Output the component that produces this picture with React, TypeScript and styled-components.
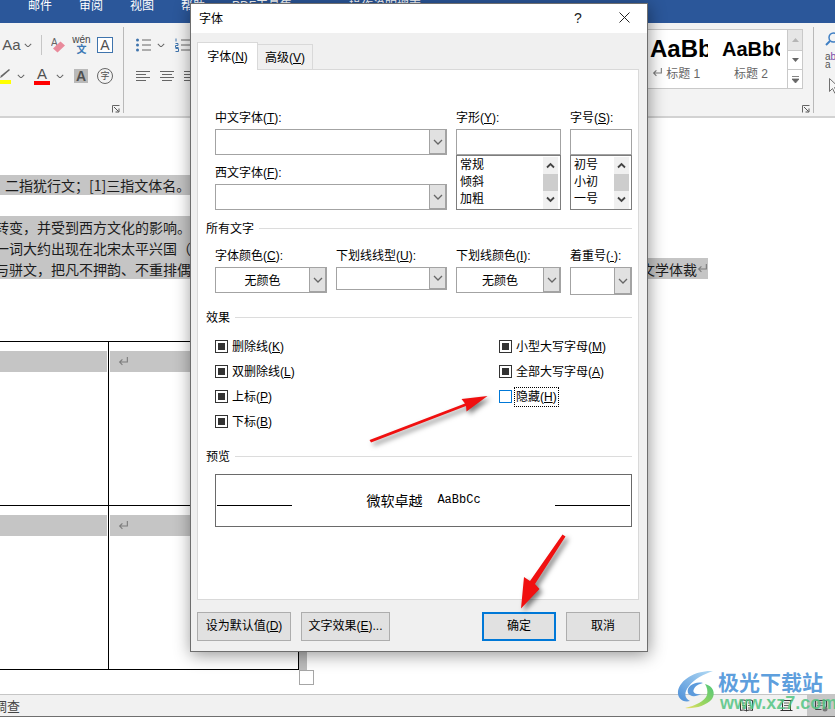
import styled, { createGlobalStyle } from 'styled-components';

const GlobalStyle = createGlobalStyle`
  html, body {
    margin: 0;
    padding: 0;
    background: #ffffff;
  }
  * {
    box-sizing: border-box;
  }
`;

const uiFont = `"Liberation Sans", "Noto Sans CJK SC", sans-serif`;

const Page = styled.div`
  position: relative;
  display: flex;
  flex-direction: column;
  width: 835px;
  height: 719px;
  overflow: hidden;
  background: #ffffff;
  font-family: ${uiFont};
  font-size: 12px;
  color: #000000;
`;

/* word window */

const TitleBar = styled.div`
  display: flex;
  flex: none;
  height: 23px;
  padding-left: 28px;
  column-gap: 27px;
  background: #2b579a;
  color: #ffffff;
  line-height: 13px;
`;

const SearchHint = styled.span`
  margin-left: 30px;
`;

const Ribbon = styled.div`
  display: flex;
  flex: none;
  height: 95px;
  padding-top: 4px;
  background: #f3f3f3;
  border-bottom: 2px solid #d2d2d2;
`;

const RibbonGroup = styled.div<{ $w: number; $pt?: number; $last?: boolean }>`
  display: flex;
  flex: none;
  flex-direction: column;
  width: ${(p) => p.$w}px;
  height: 86px;
  padding-top: ${(p) => p.$pt ?? 8}px;
  border-right: ${(p) => (p.$last ? 'none' : '1px solid #b9b9b9')};
`;

const RibbonRow = styled.div<{ $mt?: number }>`
  display: flex;
  align-items: center;
  height: 20px;
  margin-top: ${(p) => p.$mt ?? 0}px;
`;

const Cell = styled.div<{ $w: number; $ml?: number }>`
  display: flex;
  flex: none;
  flex-direction: column;
  align-items: center;
  justify-content: center;
  width: ${(p) => p.$w}px;
  margin-left: ${(p) => p.$ml ?? 0}px;
`;

const CaseLabel = styled.span`
  font-size: 15px;
  line-height: 18px;
  color: #555555;
`;

const RowDivider = styled.div`
  flex: none;
  width: 1px;
  height: 20px;
  margin-left: 8px;
  background: #c6c6c6;
`;

const PinyinText = styled.span`
  font-size: 10px;
  line-height: 9px;
  color: #444444;
`;

const PinyinGlyph = styled.span`
  font-size: 10px;
  line-height: 11px;
  font-weight: 700;
  color: #3b78b5;
`;

const BoxedLetter = styled.div`
  width: 16px;
  height: 16px;
  border: 1px solid #3f74ad;
  background: #ffffff;
  font-size: 14px;
  line-height: 14px;
  text-align: center;
  color: #505050;
`;

const ColorLetter = styled.span`
  font-size: 15px;
  line-height: 13px;
  color: #505050;
`;

const ColorBar = styled.div<{ $color: string }>`
  width: 100%;
  height: 4px;
  margin-top: 1px;
  background: ${(p) => p.$color};
`;

const ShadedLetter = styled.div`
  width: 14px;
  height: 14px;
  background: #b9b9b9;
  font-size: 14px;
  font-weight: 700;
  line-height: 14px;
  text-align: center;
  color: #505050;
`;

const CircledGlyph = styled.div`
  width: 16px;
  height: 16px;
  border: 1px solid #666666;
  border-radius: 50%;
  font-size: 9px;
  line-height: 14px;
  text-align: center;
  color: #505050;
`;

const LauncherRow = styled.div`
  display: flex;
  justify-content: flex-end;
  margin-top: auto;
  padding-right: 3px;
`;

const Gallery = styled.div`
  display: flex;
  justify-content: flex-end;
  width: 303px;
  height: 60px;
  background: #ffffff;
  border: 1px solid #c9c9c9;
`;

const StyleTile = styled.div<{ $ml: number }>`
  flex: none;
  width: 58px;
  margin-left: ${(p) => p.$ml}px;
  overflow: hidden;
`;

const StyleSample = styled.div<{ $size: number }>`
  height: 35px;
  padding-top: 4px;
  font-size: ${(p) => p.$size}px;
  font-weight: 700;
  line-height: 30px;
  white-space: nowrap;
`;

const StyleCaption = styled.div<{ $pr?: number }>`
  margin-top: 1px;
  padding-right: ${(p) => p.$pr ?? 0}px;
  line-height: 16px;
  text-align: center;
  color: #666666;
  white-space: nowrap;
`;

const GalleryScroll = styled.div`
  display: flex;
  flex: none;
  flex-direction: column;
  width: 15px;
  margin-left: 7px;
  border-left: 1px solid #c9c9c9;
`;

const GalleryButton = styled.div<{ $h: number; $disabled?: boolean }>`
  display: flex;
  align-items: center;
  justify-content: center;
  height: ${(p) => p.$h}px;
  background: ${(p) => (p.$disabled ? '#e6e6e6' : '#ffffff')};
  border-bottom: 1px solid #c9c9c9;
  &:last-child {
    border-bottom: none;
  }
`;

const EditingColumn = styled.div`
  display: flex;
  flex-direction: column;
  padding: 5px 0 0 11px;
`;

const ReplaceText = styled.div`
  margin-top: 7px;
  font-size: 10px;
  line-height: 8px;
  color: #555555;
  span {
    color: #7a4aa8;
  }
`;

const CursorSlot = styled.div`
  margin: 9px 0 0 4px;
`;

const Document = styled.div`
  flex: 1;
  padding-top: 57px;
  overflow: hidden;
  font-family: "Noto Sans CJK SC", sans-serif;
  font-size: 14px;
  color: #1c1c1c;
`;

const MarkedLine = styled.div<{ $w: number; $h?: number; $pl?: number }>`
  display: flex;
  justify-content: space-between;
  align-items: center;
  width: ${(p) => p.$w}px;
  height: ${(p) => p.$h ?? 21}px;
  padding-left: ${(p) => p.$pl ?? 0}px;
  background: #c5c5c5;
  white-space: nowrap;
  overflow: hidden;
`;

const ClippedText = styled.span`
  flex: none;
  margin-left: -5px;
`;

const LineEnd = styled.span`
  display: flex;
  flex: none;
  align-items: center;
`;

const Paragraph = styled.div`
  margin-top: 21px;
`;

const TableWrap = styled.div`
  display: flex;
  margin-top: 62px;
`;

const Table = styled.div`
  flex: none;
  width: 299px;
  border-top: 1px solid #000000;
  border-right: 1px solid #000000;
`;

const TableRow = styled.div`
  display: grid;
  grid-template-columns: 109px 189px;
  height: 164px;
  border-bottom: 1px solid #000000;
`;

const TableCell = styled.div<{ $first?: boolean }>`
  padding-top: 9px;
  padding-left: ${(p) => (p.$first ? 0 : 1)}px;
  border-right: ${(p) => (p.$first ? '1px solid #000000' : 'none')};
`;

const CellMark = styled.div<{ $pad?: boolean }>`
  display: flex;
  align-items: center;
  height: 21px;
  padding-left: ${(p) => (p.$pad ? 8 : 0)}px;
  margin-right: ${(p) => (p.$pad ? 0 : 1)}px;
  background: #c5c5c5;
`;

const RowEndMark = styled.div`
  align-self: flex-end;
  width: 8px;
  height: 19px;
  background: #bdbdbd;
`;

const ResizeHandle = styled.div`
  width: 15px;
  height: 15px;
  margin-left: 299px;
  background: #ffffff;
  border: 1px solid #a6a6a6;
`;

const StatusBar = styled.div`
  display: flex;
  flex: none;
  align-items: center;
  height: 23px;
  margin-bottom: 2px;
  background: #f1f1f1;
  border-top: 1px solid #c6c6c6;
  border-bottom: 1px solid #6f6f6f;
  font-size: 13px;
  color: #444444;
`;

const StatusText = styled.span`
  margin-left: -6px;
`;

const StatusIcons = styled.div`
  display: flex;
  align-items: center;
  align-self: stretch;
  margin-left: auto;
  column-gap: 27px;
`;

const StatusActive = styled.div`
  display: flex;
  align-items: center;
  justify-content: center;
  align-self: stretch;
  width: 28px;
  margin-left: -13px;
  background: #c6c6c6;
`;

/* font dialog */

const Dialog = styled.div`
  position: absolute;
  top: 3px;
  left: 190px;
  display: flex;
  flex-direction: column;
  width: 458px;
  height: 649px;
  background: #f0f0f0;
  border: 1px solid #6e6e6e;
  box-shadow: 1px 3px 16px rgba(0, 0, 0, 0.42);
`;

const DialogHeader = styled.div`
  display: flex;
  flex: none;
  align-items: center;
  height: 29px;
  padding: 0 0 2px 8px;
  background: #ffffff;
`;

const DialogTitle = styled.span`
  flex: 1;
`;

const CaptionButton = styled.div`
  display: flex;
  align-items: center;
  justify-content: center;
  width: 46px;
  height: 27px;
  font-size: 14px;
  color: #222222;
`;

const DialogBody = styled.div`
  flex: 1;
  padding: 9px 0 0 6px;
`;

const TabStrip = styled.div`
  display: flex;
  align-items: flex-end;
  height: 28px;
  margin-bottom: -1px;
`;

const Tab = styled.div<{ $active?: boolean }>`
  position: ${(p) => (p.$active ? 'relative' : 'static')};
  z-index: ${(p) => (p.$active ? 1 : 'auto')};
  width: ${(p) => (p.$active ? 61 : 55)}px;
  height: ${(p) => (p.$active ? 28 : 26)}px;
  padding-top: ${(p) => (p.$active ? 6 : 5)}px;
  background: ${(p) => (p.$active ? '#ffffff' : '#f0f0f0')};
  border: 1px solid #d9d9d9;
  border-bottom: ${(p) => (p.$active ? 'none' : '1px solid #d9d9d9')};
  border-left: ${(p) => (p.$active ? '1px solid #d9d9d9' : 'none')};
  line-height: 16px;
  text-align: center;
`;

const TabPanel = styled.div`
  width: 442px;
  height: 531px;
  padding: 39px 6px 0 17px;
  background: #ffffff;
  border: 1px solid #d9d9d9;
`;

const FieldLabel = styled.div`
  height: 16px;
  margin-bottom: 4px;
  line-height: 18px;
  white-space: nowrap;
`;

const FontGrid = styled.div`
  display: grid;
  grid-template-columns: 232px 105px 62px;
  column-gap: 9px;
`;

const FieldStack = styled.div`
  display: flex;
  flex-direction: column;
`;

const Combo = styled.div<{ $h?: number; $mb?: number }>`
  display: flex;
  height: ${(p) => p.$h ?? 26}px;
  margin-bottom: ${(p) => p.$mb ?? 0}px;
  background: #ffffff;
  border: 1px solid #a3a3a3;
`;

const ComboValue = styled.div`
  flex: 1;
  line-height: 26px;
  font-size: 12px;
  text-align: center;
`;

const ComboButton = styled.div`
  display: flex;
  flex: none;
  align-items: center;
  justify-content: center;
  width: 17px;
  background: #e1e1e1;
  border-left: 1px solid #a3a3a3;
  border-right: 1px solid #a3a3a3;
  border-bottom: 1px solid #a3a3a3;
`;

const TextField = styled.div`
  height: 26px;
  background: #ffffff;
  border: 1px solid #a3a3a3;
`;

const ListBox = styled.div`
  display: flex;
  height: 55px;
  background: #ffffff;
  border: 1px solid #7d7d7d;
  overflow: hidden;
`;

const ListItems = styled.div`
  flex: 1;
  padding: 1px 0 0 3px;
  line-height: 17px;
`;

const ListScroll = styled.div`
  display: flex;
  flex: none;
  flex-direction: column;
  width: 15px;
  margin: 1px 2px 0 0;
  background: #f0f0f0;
`;

const ScrollArrow = styled.div`
  display: flex;
  align-items: center;
  justify-content: center;
  height: 17px;
`;

const ScrollThumb = styled.div`
  height: 17px;
  background: #cdcdcd;
`;

const SectionHead = styled.div<{ $mt: number }>`
  display: flex;
  align-items: center;
  column-gap: 5px;
  height: 16px;
  margin: ${(p) => p.$mt}px 0 0 -9px;
`;

const SectionTitle = styled.span`
  padding-top: 2px;
  line-height: 16px;
`;

const SectionRule = styled.div`
  flex: 1;
  height: 1px;
  background: #dcdcdc;
`;

const ColorGrid = styled.div`
  display: grid;
  grid-template-columns: 112px 111px 105px 62px;
  column-gap: 9px;
  align-items: start;
  margin-top: 11px;
`;

const EffectGrid = styled.div`
  display: grid;
  grid-template-columns: 284px 1fr;
  margin-top: 9px;
`;

const CheckRow = styled.div`
  display: flex;
  align-items: center;
  column-gap: 4px;
  height: 25px;
  line-height: 16px;
`;

const CheckBox = styled.div<{ $focused?: boolean }>`
  display: flex;
  align-items: center;
  justify-content: center;
  width: 13px;
  height: 13px;
  background: #ffffff;
  border: 1px solid ${(p) => (p.$focused ? '#0078d7' : '#333333')};
`;

const CheckFill = styled.div`
  width: 7px;
  height: 7px;
  background: #333333;
`;

const FocusLabel = styled.span`
  outline: 1px dotted #000000;
  outline-offset: 1px;
`;

const PreviewBox = styled.div`
  display: flex;
  justify-content: space-between;
  height: 53px;
  margin-top: 10px;
  padding: 0 1px;
  border: 1px solid #6a6a6a;
`;

const PreviewRule = styled.div`
  flex: none;
  width: 75px;
  height: 1px;
  margin-top: 30px;
  background: #000000;
`;

const PreviewSample = styled.div`
  display: flex;
  align-items: center;
  column-gap: 15px;
  padding-bottom: 2px;
  font-size: 14px;
  color: #000000;
`;

const PreviewLatin = styled.span`
  font-family: "Liberation Mono", monospace;
  font-size: 12px;
`;

const DialogFooter = styled.div`
  display: flex;
  margin-top: 12px;
  padding-right: 7px;
  column-gap: 10px;
`;

const DialogButton = styled.div<{ $w: number; $primary?: boolean; $push?: boolean }>`
  width: ${(p) => p.$w}px;
  height: 29px;
  margin-left: ${(p) => (p.$push ? 'auto' : 0)};
  background: #e1e1e1;
  border: ${(p) => (p.$primary ? '2px solid #0078d7' : '1px solid #adadad')};
  line-height: ${(p) => (p.$primary ? 25 : 27)}px;
  text-align: center;
`;

/* overlays */

const ArrowLayer = styled.svg`
  position: absolute;
  top: 0;
  left: 0;
  pointer-events: none;
  filter: drop-shadow(3px 3px 2.5px rgba(0, 0, 0, 0.5));
`;

const Watermark = styled.div`
  position: absolute;
  top: 668px;
  left: 675px;
  display: flex;
  width: 160px;
  pointer-events: none;
`;

const LogoSvg = styled.svg`
  flex: none;
`;

const WatermarkText = styled.div`
  display: flex;
  flex-direction: column;
  margin-left: -5px;
`;

const WatermarkName = styled.span`
  margin-top: 1px;
  font-family: "Noto Sans CJK SC", sans-serif;
  font-size: 21px;
  font-weight: 700;
  line-height: 25px;
  white-space: nowrap;
  color: rgba(84, 153, 219, 0.95);
`;

const WatermarkUrl = styled.span`
  margin-left: 2px;
  font-size: 18px;
  font-weight: 700;
  line-height: 19px;
  white-space: nowrap;
  color: rgba(82, 196, 130, 0.85);
`;

/* icons */

const Chevron = ({ color = '#666666', size = 8 }: { color?: string; size?: number }) => (
  <svg width={size} height={size * 0.6} viewBox="0 0 10 6">
    <path d="M1 1l4 4 4-4" fill="none" stroke={color} strokeWidth="1.3" />
  </svg>
);

const ScrollChevron = ({ up }: { up?: boolean }) => (
  <svg width="9" height="7" viewBox="0 0 9 7">
    <path d={up ? 'M1 5.5l3.5-3.5 3.5 3.5' : 'M1 1.5l3.5 3.5 3.5-3.5'} fill="none" stroke="#444444" strokeWidth="1.8" />
  </svg>
);

const Launcher = () => (
  <svg width="8" height="8" viewBox="0 0 8 8">
    <path d="M.5 7.5v-7h7" fill="none" stroke="#666666" />
    <path d="M2 2l4.5 4.5M7 3.5v3.5H3.5" fill="none" stroke="#555555" />
  </svg>
);

const ReturnMark = () => (
  <svg width="11" height="11" viewBox="0 0 10 10">
    <path d="M8.5 1v4.5H1.5M4 3L1.5 5.5 4 8" fill="none" stroke="#7c7c7c" />
  </svg>
);

const EraserIcon = () => (
  <svg width="14" height="16" viewBox="0 0 14 16">
    <text x="0" y="9" fontSize="10" fill="#666666" fontFamily="Liberation Sans">A</text>
    <path d="M2 11.5L9.5 4.5 14 8.5 6.5 15.5Z" fill="#e98a9b" />
  </svg>
);

const PenIcon = () => (
  <svg width="11" height="10" viewBox="0 0 11 10">
    <path d="M0 9l2-1L10 1 9 0 1 6.5Z" fill="#666666" />
  </svg>
);

const ListLines = ({ dots }: { dots?: boolean }) => (
  <svg width="15" height="14" viewBox="0 0 15 14">
    {dots ? (
      <>
        <circle cx="1.5" cy="2" r="1.5" fill="#3f74ad" />
        <circle cx="1.5" cy="7" r="1.5" fill="#3f74ad" />
        <circle cx="1.5" cy="12" r="1.5" fill="#3f74ad" />
      </>
    ) : (
      <path d="M1 .5v3M.5 5.5h2.5v2H.5v2h3M.5 10.5h3v3h-3" fill="none" stroke="#3f74ad" />
    )}
    <path d="M6 2h9M6 7h9M6 12h9" stroke="#666666" />
  </svg>
);

const AlignLines = ({ center }: { center?: boolean }) => (
  <svg width="14" height="11" viewBox="0 0 14 11">
    <path d={center ? 'M0 .5h14M2 3.5h10M0 6.5h14M2 9.5h10' : 'M0 .5h14M0 3.5h10M0 6.5h14M0 9.5h10'} stroke="#666666" />
  </svg>
);

const SearchIcon = () => (
  <svg width="14" height="14" viewBox="0 0 14 14">
    <circle cx="8.5" cy="5.5" r="4.5" fill="none" stroke="#3f7fc4" strokeWidth="1.5" />
    <path d="M5 9L1 13" stroke="#3f7fc4" strokeWidth="2" />
  </svg>
);

const CursorIcon = () => (
  <svg width="12" height="16" viewBox="0 0 12 16">
    <path d="M.5.5v13l3-3 2.5 5 2-1-2.500-5h4.500Z" fill="#f6f6f6" stroke="#707070" />
  </svg>
);

const ReadIcon = () => (
  <svg width="13" height="13" viewBox="0 0 13 13">
    <path d="M6.500 2C5 .8 2.500.8.500 1.500v10c2-.700 4.500-.700 6 .500 1.500-1.200 4-1.200 6-.500v-10C10.500.8 8 .8 6.500 2ZM6.500 2v10" fill="none" stroke="#333333" />
    <path d="M2 4h3M2 6.500h3M2 9h3M8 4h3M8 6.500h3M8 9h3" stroke="#666666" />
  </svg>
);

const PageIcon = () => (
  <svg width="13" height="13" viewBox="0 0 13 13">
    <path d="M.5 1.500h12M.5 11.500h12M2.500 1.500v10M10.500 1.500v10" fill="none" stroke="#333333" />
    <path d="M4 4h5M4 6.500h5M4 9h5" stroke="#666666" />
  </svg>
);

const WebIcon = () => (
  <svg width="13" height="13" viewBox="0 0 13 13">
    <path d="M.5 1.500h11v7M.5 1.500v9h6" fill="none" stroke="#444444" />
    <path d="M2 4h8M2 6.500h6" stroke="#777777" />
    <circle cx="10" cy="10" r="2.500" fill="#777777" />
  </svg>
);

const CloseIcon = () => (
  <svg width="11" height="11" viewBox="0 0 11 11">
    <path d="M.5.5l10 10M10.500.5l-10 10" stroke="#222222" />
  </svg>
);

const LogoMark = () => (
  <LogoSvg width="48" height="42" viewBox="0 0 48 42">
    <defs>
      <linearGradient id="swirlBlue" x1="1" y1="0" x2="0" y2="1">
        <stop offset="0" stopColor="#b5dcf5" />
        <stop offset="1" stopColor="#4d8fd8" />
      </linearGradient>
      <linearGradient id="swirlGreen" x1="1" y1="0" x2="0" y2="1">
        <stop offset="0" stopColor="#4fc67c" />
        <stop offset="0.6" stopColor="#9bd65f" />
        <stop offset="1" stopColor="#f0e06a" />
      </linearGradient>
    </defs>
    <path d="M38 3C22 2 5 11 3 23c-1 7 5 12 12 10C9 30 9 24 14 18 19 11 29 6 38 3Z" fill="url(#swirlBlue)" />
    <path d="M28 15C19 13 11 19 13 25c2 4 8 4 13 1-6 1-9-2-7-5 1-3 5-5 9-6Z" fill="#5d9bdc" />
    <path d="M30 16c8 2 11 9 7 15C31 38 19 41 10 40c10-2 20-7 22-13 1-4 0-8-2-11Z" fill="url(#swirlGreen)" />
  </LogoSvg>
);

const fontStyles = ['常规', '倾斜', '加粗'];
const fontSizes = ['初号', '小初', '一号'];

const ListWithScroll = ({ items }: { items: string[] }) => (
  <ListBox>
    <ListItems>
      {items.map((item) => (
        <div key={item}>{item}</div>
      ))}
    </ListItems>
    <ListScroll>
      <ScrollArrow>
        <ScrollChevron up />
      </ScrollArrow>
      <ScrollThumb />
      <ScrollArrow>
        <ScrollChevron />
      </ScrollArrow>
    </ListScroll>
  </ListBox>
);

const ComboBox = ({ value, h, mb }: { value?: string; h?: number; mb?: number }) => (
  <Combo $h={h} $mb={mb}>
    <ComboValue>{value}</ComboValue>
    <ComboButton>
      <Chevron size={10} />
    </ComboButton>
  </Combo>
);

const leftEffects = [
  ['删除线', 'K'],
  ['双删除线', 'L'],
  ['上标', 'P'],
  ['下标', 'B'],
];

const rightEffects = [
  ['小型大写字母', 'M'],
  ['全部大写字母', 'A'],
];

const FontDialog = () => (
  <Dialog>
    <DialogHeader>
      <DialogTitle>字体</DialogTitle>
      <CaptionButton>?</CaptionButton>
      <CaptionButton>
        <CloseIcon />
      </CaptionButton>
    </DialogHeader>
    <DialogBody>
      <TabStrip>
        <Tab $active>
          字体(<u>N</u>)
        </Tab>
        <Tab>
          高级(<u>V</u>)
        </Tab>
      </TabStrip>
      <TabPanel>
        <FontGrid>
          <FieldStack>
            <FieldLabel>
              中文字体(<u>T</u>):
            </FieldLabel>
            <ComboBox mb={9} />
            <FieldLabel>
              西文字体(<u>F</u>):
            </FieldLabel>
            <ComboBox />
          </FieldStack>
          <FieldStack>
            <FieldLabel>
              字形(<u>Y</u>):
            </FieldLabel>
            <TextField />
            <ListWithScroll items={fontStyles} />
          </FieldStack>
          <FieldStack>
            <FieldLabel>
              字号(<u>S</u>):
            </FieldLabel>
            <TextField />
            <ListWithScroll items={fontSizes} />
          </FieldStack>
        </FontGrid>

        <SectionHead $mt={10}>
          <SectionTitle>所有文字</SectionTitle>
          <SectionRule />
        </SectionHead>
        <ColorGrid>
          <FieldStack>
            <FieldLabel>
              字体颜色(<u>C</u>):
            </FieldLabel>
            <ComboBox value="无颜色" />
          </FieldStack>
          <FieldStack>
            <FieldLabel>
              下划线线型(<u>U</u>):
            </FieldLabel>
            <ComboBox h={23} />
          </FieldStack>
          <FieldStack>
            <FieldLabel>
              下划线颜色(<u>I</u>):
            </FieldLabel>
            <ComboBox value="无颜色" />
          </FieldStack>
          <FieldStack>
            <FieldLabel>
              着重号(<u>·</u>):
            </FieldLabel>
            <ComboBox h={28} />
          </FieldStack>
        </ColorGrid>

        <SectionHead $mt={14}>
          <SectionTitle>效果</SectionTitle>
          <SectionRule />
        </SectionHead>
        <EffectGrid>
          <div>
            {leftEffects.map(([name, key]) => (
              <CheckRow key={key}>
                <CheckBox>
                  <CheckFill />
                </CheckBox>
                <span>
                  {name}(<u>{key}</u>)
                </span>
              </CheckRow>
            ))}
          </div>
          <div>
            {rightEffects.map(([name, key]) => (
              <CheckRow key={key}>
                <CheckBox>
                  <CheckFill />
                </CheckBox>
                <span>
                  {name}(<u>{key}</u>)
                </span>
              </CheckRow>
            ))}
            <CheckRow>
              <CheckBox $focused />
              <FocusLabel>
                隐藏(<u>H</u>)
              </FocusLabel>
            </CheckRow>
          </div>
        </EffectGrid>

        <SectionHead $mt={14}>
          <SectionTitle>预览</SectionTitle>
          <SectionRule />
        </SectionHead>
        <PreviewBox>
          <PreviewRule />
          <PreviewSample>
            <span>微软卓越</span>
            <PreviewLatin>AaBbCc</PreviewLatin>
          </PreviewSample>
          <PreviewRule />
        </PreviewBox>
      </TabPanel>
      <DialogFooter>
        <DialogButton $w={94}>
          设为默认值(<u>D</u>)
        </DialogButton>
        <DialogButton $w={89}>
          文字效果(<u>E</u>)...
        </DialogButton>
        <DialogButton $w={74} $primary $push>
          确定
        </DialogButton>
        <DialogButton $w={74}>取消</DialogButton>
      </DialogFooter>
    </DialogBody>
  </Dialog>
);

export default function App() {
  return (
    <Page>
      <GlobalStyle />
      <TitleBar>
        <span>邮件</span>
        <span>审阅</span>
        <span>视图</span>
        <span>帮助</span>
        <span>PDF工具集</span>
        <SearchHint>操作说明搜索</SearchHint>
      </TitleBar>

      <Ribbon>
        <RibbonGroup $w={124}>
          <RibbonRow>
            <Cell $w={15} $ml={4}>
              <CaseLabel>Aa</CaseLabel>
            </Cell>
            <Cell $w={10} $ml={4}>
              <Chevron />
            </Cell>
            <RowDivider />
            <Cell $w={14} $ml={9}>
              <EraserIcon />
            </Cell>
            <Cell $w={17} $ml={8}>
              <PinyinText>wén</PinyinText>
              <PinyinGlyph>文</PinyinGlyph>
            </Cell>
            <Cell $w={16} $ml={7}>
              <BoxedLetter>A</BoxedLetter>
            </Cell>
          </RibbonRow>
          <RibbonRow $mt={11}>
            <Cell $w={11}>
              <PenIcon />
              <ColorBar $color="#ffff00" />
            </Cell>
            <Cell $w={10} $ml={5}>
              <Chevron />
            </Cell>
            <Cell $w={16} $ml={8}>
              <ColorLetter>A</ColorLetter>
              <ColorBar $color="#ff0000" />
            </Cell>
            <Cell $w={10} $ml={5}>
              <Chevron />
            </Cell>
            <Cell $w={14} $ml={9}>
              <ShadedLetter>A</ShadedLetter>
            </Cell>
            <Cell $w={16} $ml={9}>
              <CircledGlyph>字</CircledGlyph>
            </Cell>
          </RibbonRow>
          <LauncherRow>
            <Launcher />
          </LauncherRow>
        </RibbonGroup>

        <RibbonGroup $w={376}>
          <RibbonRow>
            <Cell $w={15} $ml={12}>
              <ListLines dots />
            </Cell>
            <Cell $w={10} $ml={5}>
              <Chevron />
            </Cell>
            <Cell $w={15} $ml={9}>
              <ListLines />
            </Cell>
          </RibbonRow>
          <RibbonRow $mt={11}>
            <Cell $w={14} $ml={12}>
              <AlignLines />
            </Cell>
            <Cell $w={14} $ml={10}>
              <AlignLines center />
            </Cell>
            <Cell $w={14} $ml={10}>
              <AlignLines />
            </Cell>
          </RibbonRow>
        </RibbonGroup>

        <RibbonGroup $w={314} $pt={2}>
          <Gallery>
            <StyleTile $ml={0}>
              <StyleSample $size={24}>AaBb</StyleSample>
              <StyleCaption $pr={6}>
                <ReturnMark /> 标题 1
              </StyleCaption>
            </StyleTile>
            <StyleTile $ml={14}>
              <StyleSample $size={20}>AaBbC</StyleSample>
              <StyleCaption>标题 2</StyleCaption>
            </StyleTile>
            <GalleryScroll>
              <GalleryButton $h={21} $disabled>
                <svg width="7" height="4" viewBox="0 0 7 4">
                  <path d="M3.500 0L7 4H0Z" fill="#b5b5b5" />
                </svg>
              </GalleryButton>
              <GalleryButton $h={19}>
                <svg width="7" height="4" viewBox="0 0 7 4">
                  <path d="M3.500 4L7 0H0Z" fill="#666666" />
                </svg>
              </GalleryButton>
              <GalleryButton $h={18}>
                <svg width="7" height="7" viewBox="0 0 7 7">
                  <path d="M0 .5h7M3.500 7L7 3H0Z" stroke="#666666" strokeWidth=".8" fill="#666666" />
                </svg>
              </GalleryButton>
            </GalleryScroll>
          </Gallery>
          <LauncherRow>
            <Launcher />
          </LauncherRow>
        </RibbonGroup>

        <RibbonGroup $w={21} $pt={0} $last>
          <EditingColumn>
            <SearchIcon />
            <ReplaceText>
              a<span>b</span>
              <br />a
            </ReplaceText>
            <CursorSlot>
              <CursorIcon />
            </CursorSlot>
          </EditingColumn>
        </RibbonGroup>
      </Ribbon>

      <Document>
        <MarkedLine $w={210} $h={20} $pl={5}>
          二指犹行文；[1]三指文体名。
        </MarkedLine>
        <Paragraph>
          <MarkedLine $w={400}>
            <ClippedText>转变，并受到西方文化的影响。</ClippedText>
          </MarkedLine>
          <MarkedLine $w={400}>
            <ClippedText>一词大约出现在北宋太平兴国（</ClippedText>
          </MarkedLine>
          <MarkedLine $w={708}>
            <ClippedText>与骈文，把凡不押韵、不重排偶</ClippedText>
            <LineEnd>
              文学体裁
              <ReturnMark />
            </LineEnd>
          </MarkedLine>
        </Paragraph>
        <TableWrap>
          <Table>
            <TableRow>
              <TableCell $first>
                <CellMark />
              </TableCell>
              <TableCell>
                <CellMark $pad>
                  <ReturnMark />
                </CellMark>
              </TableCell>
            </TableRow>
            <TableRow>
              <TableCell $first>
                <CellMark />
              </TableCell>
              <TableCell>
                <CellMark $pad>
                  <ReturnMark />
                </CellMark>
              </TableCell>
            </TableRow>
          </Table>
          <RowEndMark />
        </TableWrap>
        <ResizeHandle />
      </Document>

      <StatusBar>
        <StatusText>调查</StatusText>
        <StatusIcons>
          <ReadIcon />
          <PageIcon />
          <StatusActive>
            <WebIcon />
          </StatusActive>
        </StatusIcons>
      </StatusBar>

      <FontDialog />

      <ArrowLayer width="835" height="719" viewBox="0 0 835 719">
        <path d="M369.500 440L465 403.500 461.500 399 487.500 396 466.500 411.500 466 406 371 442.500Z" fill="#f01010" />
        <path d="M562.500 534.500L565.500 536.500 535 584 539.500 589 521 608.500 524 577 530 581Z" fill="#f01010" />
      </ArrowLayer>

      <Watermark>
        <LogoMark />
        <WatermarkText>
          <WatermarkName>极光下载站</WatermarkName>
          <WatermarkUrl>www.xz7.com</WatermarkUrl>
        </WatermarkText>
      </Watermark>
    </Page>
  );
}
